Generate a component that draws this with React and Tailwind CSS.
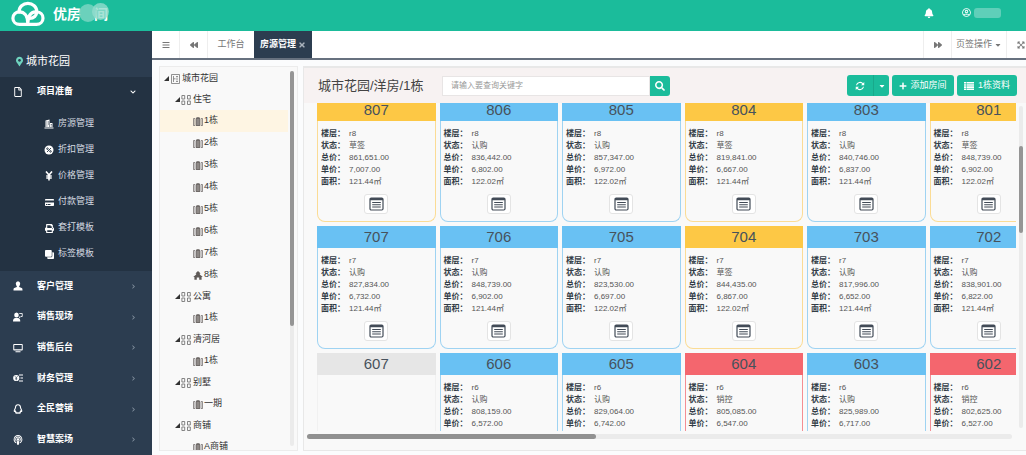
import React, { useState } from 'react';
import clsx from 'clsx';
import {
  FaBars, FaBackward, FaForward, FaTimes, FaCaretDown, FaBell, FaRegUserCircle,
  FaRegFile, FaYenSign, FaCreditCard, FaPrint, FaClone, FaPodcast,
  FaMapMarkerAlt, FaSearch, FaPlus, FaChevronDown, FaChevronRight, FaExpandArrowsAlt,
} from 'react-icons/fa';

/* ---------- icons ---------- */

const Svg = ({ children, className = 'w-[10px] h-[10px]', viewBox = '0 0 20 20' }) => (
  <svg viewBox={viewBox} className={clsx('shrink-0', className)} fill="currentColor" aria-hidden="true">
    {children}
  </svg>
);

const CloudLogo = () => (
  <svg viewBox="0 0 34 26" className="w-[34px] h-[26px] shrink-0" fill="none" stroke="white" strokeWidth="3.2" strokeLinecap="round" strokeLinejoin="round" aria-hidden="true">
    <path d="M8.600 10.800C4.800 10.800 1.900 13.600 1.900 17.200C1.900 20.800 4.800 23.400 8.600 23.400H25.400C29.200 23.400 32 20.800 32 17.200C32 13.600 29.200 11 25.800 11" />
    <path d="M8 10.800C8 5.800 12 2.400 16.900 2.400C21.800 2.400 25.800 5.800 25.800 10.600C25.800 14.600 22.600 17.400 18.800 17.400" />
    <path d="M8.600 10.800C12.800 10.800 16.800 14.200 16.800 22.600C16.800 15.600 18.800 11.200 24.600 10.800" />
  </svg>
);

const BuildingIcon = () => (
  <Svg>
    <path d="M1 17h18v2H1zM3 3l8-2v15H3zM12 8h5v8h-5z" />
    <path d="M5 5h1.6v2H5zM8 5h1.6v2H8zM5 9h1.6v2H5zM8 9h1.6v2H8zM5 13h1.6v2H5zM13.6 10h1.6v2h-1.6zM13.6 13h1.6v2h-1.6z" fill="#233242" />
  </Svg>
);

const DiscountIcon = () => (
  <Svg>
    <circle cx="10" cy="10" r="9" />
    <g stroke="#233242" strokeWidth="1.8" fill="none">
      <path d="M14 6l-8 8" />
      <circle cx="7" cy="7.4" r="1.6" />
      <circle cx="13" cy="12.8" r="1.6" />
    </g>
  </Svg>
);

const YenIcon = () => (
  <Svg>
    <path d="M4 1l6 7 6-7M10 8v11M4.500 10h11M4.500 14h11" fill="none" stroke="currentColor" strokeWidth="3.200" />
  </Svg>
);

const CustomerIcon = () => (
  <Svg>
    <ellipse cx="10" cy="5.6" rx="4.4" ry="5" />
    <path d="M7.6 9h4.8v3l5 2.2c1.4.7 1.6 2 1.6 4.8H1c0-2.8.2-4.1 1.6-4.8l5-2.2z" />
  </Svg>
);

const SalesIcon = () => (
  <Svg>
    <ellipse cx="7" cy="6" rx="4.6" ry="5" />
    <path d="M0 19c0-4.500 1.500-6.500 5-7h5c3 .5 4.500 2.500 4.500 7z" />
    <path d="M12.500 3h6v6h-3l-2.500 2.600V9" fill="none" stroke="currentColor" strokeWidth="1.700" />
  </Svg>
);

const ScreenIcon = () => (
  <Svg>
    <path fillRule="evenodd" d="M2 2h16c.8 0 1.500.7 1.500 1.500v10c0 .8-.7 1.500-1.500 1.500H2c-.8 0-1.500-.7-1.500-1.500v-10C.5 2.700 1.200 2 2 2zm.5 2v8.500h15V4zM5 16.500h10V18.500H5z" />
  </Svg>
);

const FinanceIcon = () => (
  <Svg>
    <circle cx="6.500" cy="10" r="6.200" />
    <path d="M4 6.500l2.500 3 2.500-3M6.500 9.500v5M4.500 11.500h4" stroke="#2c3d50" strokeWidth="1.400" fill="none" />
    <path d="M12 3h8v2h-8zM15 9h5v2h-5zM12 15h8v2h-8z" />
  </Svg>
);

const PenguinIcon = () => (
  <Svg>
    <path d="M10 1.500c-3.600 0-5 2.600-5 5.500 0 2-2.500 4.500-2.500 7 0 1.200 1.300.8 2 0 .3 1 .9 1.700 1.600 2.300-1.400.6-1 2.200.9 2.200 1.400 0 2.400-.4 3-1 .6.600 1.600 1 3 1 1.900 0 2.300-1.600.9-2.200.7-.6 1.300-1.300 1.600-2.300.7.8 2 1.200 2 0 0-2.500-2.500-5-2.500-7 0-2.900-1.400-5.500-5-5.500z" fill="none" stroke="currentColor" strokeWidth="2.200" />
  </Svg>
);

const RefreshIcon = () => (
  <Svg>
    <path d="M3 8.500A7.200 7.200 0 0 1 16 6M17 11.500A7.200 7.200 0 0 1 4 14" fill="none" stroke="currentColor" strokeWidth="2.200" />
    <path d="M18.500 2v6.500H12zM1.500 18v-6.500H8z" />
  </Svg>
);

const ListIcon = () => (
  <Svg>
    <path d="M0 2h4v3.200H0zM5 2h15v3.200H5zM0 6.300h4v3.200H0zM5 6.300h15v3.200H5zM0 10.600h4v3.200H0zM5 10.600h15v3.200H5zM0 14.900h4V18H0zM5 14.900h15V18H5z" />
  </Svg>
);

const DetailIcon = () => (
  <Svg className="w-[15px] h-[14px]" viewBox="0 0 15 14">
    <rect x="1" y="1" width="13" height="12" rx="1.200" fill="none" stroke="currentColor" strokeWidth="1.200" />
    <path d="M1 1h13v2.200H1zM3.200 5h8.600v1H3.200zM3.200 7.200h8.600v1H3.200zM3.200 9.400h8.600v1H3.200z" />
  </Svg>
);

const ProjectIcon = () => (
  <Svg className="w-[9px] h-[10px]" viewBox="0 0 9 10">
    <path d="M.5.5h8v9h-8zM2.500 2v6M2.500 4.800h2M5 2.500h2M5 7.500h2M6 3.500v3" fill="none" stroke="#777" strokeWidth=".8" />
  </Svg>
);

const AreaIcon = () => (
  <Svg className="w-[11px] h-[10px]" viewBox="0 0 11 10">
    <path d="M.9.500h2.800v3.500H.9zM6.500.5h2.800v3.500H6.500zM.9 6h2.800v3.500H.9zM6.500 6h2.800v3.500H6.500z" fill="none" stroke="#777" strokeWidth=".9" />
  </Svg>
);

const BlockIcon = () => (
  <Svg className="w-[10px] h-[9px]" viewBox="0 0 10 9">
    <path d="M3 .8L5 0l2 .8V9H3z" fill="#6f6a68" />
    <path d="M4.200 2v6M5.800 2v6" stroke="#b9b5b2" strokeWidth=".6" />
    <path d="M.5 1.500v7.200M2 1.500v7.200M8 1.500v7.200M9.500 1.500v7.200M.5 1.500H2M8 1.500h1.500M.5 8.500H2M8 8.500h1.500" stroke="#7a7573" strokeWidth=".8" fill="none" />
  </Svg>
);

const VillaIcon = () => (
  <Svg className="w-[10px] h-[9px]" viewBox="0 0 10 9">
    <path d="M5 0l2.600 2.400H6.800V3.600L9.800 6H8.600v2.800H6.200V6.500H3.800v2.300H1.400V6H.2l3-2.400V2.400h-.8z" fill="#5f5a58" />
  </Svg>
);

/* ---------- data ---------- */

const subMenu = [
  { name: '房源管理', icon: <BuildingIcon /> },
  { name: '折扣管理', icon: <DiscountIcon /> },
  { name: '价格管理', icon: <YenIcon /> },
  { name: '付款管理', icon: <FaCreditCard size={9} /> },
  { name: '套打模板', icon: <FaPrint size={9} /> },
  { name: '标签模板', icon: <FaClone size={9} className="-scale-x-100" /> },
];

const mainMenu = [
  { name: '客户管理', icon: <CustomerIcon /> },
  { name: '销售现场', icon: <SalesIcon /> },
  { name: '销售后台', icon: <ScreenIcon /> },
  { name: '财务管理', icon: <FinanceIcon /> },
  { name: '全民营销', icon: <PenguinIcon /> },
  { name: '智慧案场', icon: <FaPodcast size={10} /> },
];

const tree = [
  { name: '住宅', children: ['1栋', '2栋', '3栋', '4栋', '5栋', '6栋', '7栋', '8栋'] },
  { name: '公寓', children: ['1栋'] },
  { name: '清河居', children: ['1栋'] },
  { name: '别墅', children: ['一期'] },
  { name: '商铺', children: ['A商铺'] },
];

const rooms = [
  { no: '807', floor: 'r8', status: '草签', total: '861,651.00', price: '7,007.00', area: '121.44㎡' },
  { no: '806', floor: 'r8', status: '认购', total: '836,442.00', price: '6,802.00', area: '122.02㎡' },
  { no: '805', floor: 'r8', status: '认购', total: '857,347.00', price: '6,972.00', area: '122.02㎡' },
  { no: '804', floor: 'r8', status: '草签', total: '819,841.00', price: '6,667.00', area: '121.44㎡' },
  { no: '803', floor: 'r8', status: '认购', total: '840,746.00', price: '6,837.00', area: '121.44㎡' },
  { no: '801', floor: 'r8', status: '草签', total: '848,739.00', price: '6,902.00', area: '122.02㎡' },
  { no: '707', floor: 'r7', status: '认购', total: '827,834.00', price: '6,732.00', area: '121.44㎡' },
  { no: '706', floor: 'r7', status: '认购', total: '848,739.00', price: '6,902.00', area: '121.44㎡' },
  { no: '705', floor: 'r7', status: '认购', total: '823,530.00', price: '6,697.00', area: '122.02㎡' },
  { no: '704', floor: 'r7', status: '草签', total: '844,435.00', price: '6,867.00', area: '122.02㎡' },
  { no: '703', floor: 'r7', status: '认购', total: '817,996.00', price: '6,652.00', area: '121.44㎡' },
  { no: '702', floor: 'r7', status: '认购', total: '838,901.00', price: '6,822.00', area: '121.44㎡' },
  { no: '607' },
  { no: '606', floor: 'r6', status: '认购', total: '808,159.00', price: '6,572.00' },
  { no: '605', floor: 'r6', status: '认购', total: '829,064.00', price: '6,742.00' },
  { no: '604', floor: 'r6', status: '销控', total: '805,085.00', price: '6,547.00' },
  { no: '603', floor: 'r6', status: '认购', total: '825,989.00', price: '6,717.00' },
  { no: '602', floor: 'r6', status: '销控', total: '802,625.00', price: '6,527.00' },
];

const fields = [
  ['floor', '楼层：'],
  ['status', '状态：'],
  ['total', '总价：'],
  ['price', '单价：'],
  ['area', '面积：'],
];

const statusStyle = {
  草签: { head: 'bg-[#fdc845]', border: 'border-[#fbdc95]' },
  认购: { head: 'bg-[#69c1f3]', border: 'border-[#9fd3f2]' },
  销控: { head: 'bg-[#f4666e]', border: 'border-[#f48d93]' },
};
const emptyStyle = { head: 'bg-[#e6e6e6]', border: 'border-[#f1f1f1]' };

/* ---------- parts ---------- */

const TopBar = () => (
  <header className="h-[31px] shrink-0 bg-[#1bbc9b] flex items-center justify-between pl-[11px] pr-[25px] text-white">
    <div className="flex items-center gap-2 pb-1">
      <CloudLogo />
      <div className="relative flex text-[14px] leading-5 font-bold">
        <span>优房</span>
        <span className="w-[13px]"></span>
        <span>间</span>
        <span className="absolute left-[26px] top-0 w-[18px] h-[18px] rounded-full bg-[#7fd6c4]/80"></span>
        <span className="absolute left-[39px] -top-px w-[17px] h-[17px] rounded-full bg-[#93dccd]/80"></span>
      </div>
    </div>
    <div className="flex items-center gap-7 pb-[6px]">
      <button aria-label="notifications"><FaBell size={10} /></button>
      <button className="flex items-center gap-[3px]" aria-label="account">
        <FaRegUserCircle size={9} />
        <span className="w-[27px] h-[10px] rounded-[3px] bg-[#5fcfb9]"></span>
      </button>
    </div>
  </header>
);

const Sidebar = () => (
  <aside className="w-[152px] shrink-0 bg-[#2c3d50] text-white flex flex-col overflow-hidden">
    <div className="h-[46px] shrink-0 flex items-center gap-[3px] pl-4 pt-[14px] text-[11px] leading-4">
      <FaMapMarkerAlt size={11} className="w-[7px] text-[#6fd3bf]" />
      <span>城市花园</span>
    </div>

    <div className="shrink-0 bg-[#233242] pb-1">
      <a href="#prepare" className="h-[30px] flex items-center pl-[13px] pr-4 text-[9px] font-bold">
        <FaRegFile size={10} className="w-[10px]" />
        <span className="ml-[14px] flex-1">项目准备</span>
        <FaChevronDown size={6} />
      </a>
      <ul className="pt-1">
        {subMenu.map((item) => (
          <li key={item.name}>
            <a href="#sub" className="h-[26px] flex items-center gap-1 pl-11 text-[9px] text-[#d5dbe1]">
              <span className="w-[10px] flex justify-center text-white">{item.icon}</span>
              <span>{item.name}</span>
            </a>
          </li>
        ))}
      </ul>
    </div>

    <nav className="flex-1 min-h-0 flex flex-col">
      {mainMenu.map((item) => (
        <a key={item.name} href="#menu" className="h-[31px] min-h-0 flex items-center pl-3 pr-4 text-[9px] font-bold">
          <span className="w-[11px] flex justify-center">{item.icon}</span>
          <span className="ml-[14px] flex-1">{item.name}</span>
          <FaChevronRight size={5} className="text-[#8592a0]" />
        </a>
      ))}
    </nav>
  </aside>
);

const TabBar = () => (
  <div className="h-[29px] shrink-0 flex bg-white border-b-2 border-[#67717f] text-[9px] text-[#777] overflow-hidden">
    <button className="w-7 shrink-0 flex items-center justify-center border-r border-[#eee]" aria-label="menu"><FaBars size={8} /></button>
    <button className="w-7 shrink-0 flex items-center justify-center border-r border-[#eee]" aria-label="previous"><FaBackward size={8} /></button>
    <button className="w-[46px] shrink-0">工作台</button>
    <button className="w-[58px] shrink-0 flex items-center justify-center gap-[2px] bg-[#2c3d50] text-white font-bold">
      房源管理
      <FaTimes size={8} className="text-[#aab3bd]" />
    </button>
    <div className="ml-auto -mr-2 flex shrink-0">
      <button className="w-7 flex items-center justify-center border-l border-[#eee]" aria-label="next"><FaForward size={8} /></button>
      <button className="w-[55px] flex items-center justify-center gap-[2px] border-l border-[#eee]">
        页签操作
        <FaCaretDown size={8} />
      </button>
      <button className="w-7 flex items-center justify-center border-l border-[#eee]" aria-label="fullscreen"><FaExpandArrowsAlt size={8} /></button>
    </div>
  </div>
);

const Arrow = () => (
  <Svg className="w-[5px] h-[5px]" viewBox="0 0 5 5"><path d="M5 0v5H0z" fill="#333" /></Svg>
);

const TreePanel = () => {
  const [active, setActive] = useState('住宅-1栋');

  return (
    <div className="w-[139px] shrink-0 flex bg-[#f9f9f9] border border-[#ececec] overflow-hidden text-[9px] text-[#333]">
      <div className="flex-1 pt-px">
        <button className="w-full h-[21px] flex items-center gap-px pl-1">
          <Arrow />
          <span className="w-[11px] flex justify-center"><ProjectIcon /></span>
          城市花园
        </button>
        {tree.map((group) => (
          <div key={group.name}>
            <button className="w-full h-[21px] flex items-center gap-px pl-[15px]">
              <Arrow />
              <AreaIcon />
              {group.name}
            </button>
            {group.children.map((name) => {
              const id = `${group.name}-${name}`;
              return (
                <button
                  key={id}
                  onClick={() => setActive(id)}
                  className={clsx('w-full h-[22px] flex items-center gap-px pl-[33px]', active === id && 'bg-[#fef5e3]')}
                >
                  {name === '8栋' ? <VillaIcon /> : <BlockIcon />}
                  {name}
                </button>
              );
            })}
          </div>
        ))}
      </div>
      <div className="w-1 ml-[2px] mr-[3px] my-1 rounded-full bg-[#ebebeb]">
        <div className="h-[68%] rounded-full bg-[#959595]"></div>
      </div>
    </div>
  );
};

const RoomCard = ({ room }) => {
  const style = statusStyle[room.status] || emptyStyle;

  return (
    <article className={clsx('h-[123px] flex flex-col border border-t-0 rounded-b-lg', style.border)}>
      <div className={clsx('h-[22px] -mx-px pt-1 shrink-0', style.head)}>
        <h3 className="text-center text-[15px] leading-[14px] text-[#47525c]">{room.no}</h3>
      </div>
      {room.status && (
        <>
          <dl className="pl-[3px] pt-[7px] text-[8px] leading-3">
            {fields.map(([key, label]) => room[key] && (
              <div key={key} className="flex">
                <dt className="w-7 shrink-0 font-bold text-[#333d47]">{label}</dt>
                <dd className="text-[#555]">{room[key]}</dd>
              </div>
            ))}
          </dl>
          <button
            className="w-6 h-5 mt-[6px] mx-auto flex items-center justify-center rounded-[3px] border border-[#e4e4e4] bg-white text-[#424b57]"
            aria-label={room.no}
          >
            <DetailIcon />
          </button>
        </>
      )}
    </article>
  );
};

const Toolbar = () => {
  const [keyword, setKeyword] = useState('');

  return (
    <div className="h-[35px] shrink-0 flex items-center bg-[#f7f2f2] pl-[14px] pr-[9px]">
      <h2 className="w-[124px] shrink-0 text-[13px] leading-5 whitespace-nowrap text-[#444]">城市花园/洋房/1栋</h2>
      <form className="flex" onSubmit={(e) => e.preventDefault()}>
        <input
          type="text"
          aria-label="请输入要查询关键字"
          placeholder="请输入要查询关键字"
          value={keyword}
          onChange={(e) => setKeyword(e.target.value)}
          className="w-[208px] h-[20px] px-2 bg-white border border-[#e8e5e5] text-[8px] outline-none placeholder:text-[#999]"
        />
        <button type="submit" className="w-5 h-[20px] flex items-center justify-center rounded-r-[3px] bg-[#1bbc9b] text-white" aria-label="search">
          <FaSearch size={10} />
        </button>
      </form>
      <div className="ml-auto flex gap-[3px] text-[9px] text-white">
        <div className="flex rounded-[3px] bg-[#1bbc9b]">
          <button className="w-[26px] h-[21px] flex items-center justify-center" aria-label="refresh"><RefreshIcon /></button>
          <button className="w-4 flex items-center justify-center border-l border-[#18a98b]" aria-label="more"><FaCaretDown size={8} /></button>
        </div>
        <button className="w-[62px] h-[21px] flex items-center justify-center gap-[3px] rounded-[3px] bg-[#1bbc9b] whitespace-nowrap">
          <FaPlus size={8} />
          添加房间
        </button>
        <button className="w-[60px] h-[21px] flex items-center justify-center gap-1 rounded-[3px] bg-[#1bbc9b] whitespace-nowrap">
          <ListIcon />
          1栋资料
        </button>
      </div>
    </div>
  );
};

const RoomPanel = () => (
  <section className="flex-1 min-w-0 flex flex-col bg-[#f9f9f9] border-l border-b border-t-2 border-[#e8e8e8]">
    <Toolbar />
    <div className="flex-1 min-h-0 flex pl-[13px]">
      <div className="flex-1 min-w-0 overflow-hidden">
        <div className="w-[731px] -mt-1 grid grid-cols-6 gap-1">
          {rooms.map((room) => <RoomCard key={room.no} room={room} />)}
        </div>
      </div>
      <div className="w-1 mx-[3px] my-[3px] flex flex-col rounded-full bg-[#ebebeb]">
        <div className="h-[27%] mt-10 rounded-full bg-[#959595]"></div>
      </div>
    </div>
    <div className="h-[5px] shrink-0 mt-[3px] mb-[11px] ml-[3px] mr-[14px] rounded-full bg-[#ebebeb]">
      <div className="w-[41%] h-full rounded-full bg-[#919191]"></div>
    </div>
  </section>
);

const App = () => (
  <div className="h-screen flex flex-col overflow-hidden bg-[#fbfcfd] font-['Liberation_Sans','Noto_Sans_CJK_SC',sans-serif]">
    <TopBar />
    <div className="flex-1 min-h-0 flex">
      <Sidebar />
      <main className="flex-1 min-w-0 flex flex-col">
        <TabBar />
        <div className="flex-1 min-h-0 flex gap-[5px] pl-[7px] pt-[6px] pb-1">
          <TreePanel />
          <RoomPanel />
        </div>
      </main>
    </div>
  </div>
);

export default App;
